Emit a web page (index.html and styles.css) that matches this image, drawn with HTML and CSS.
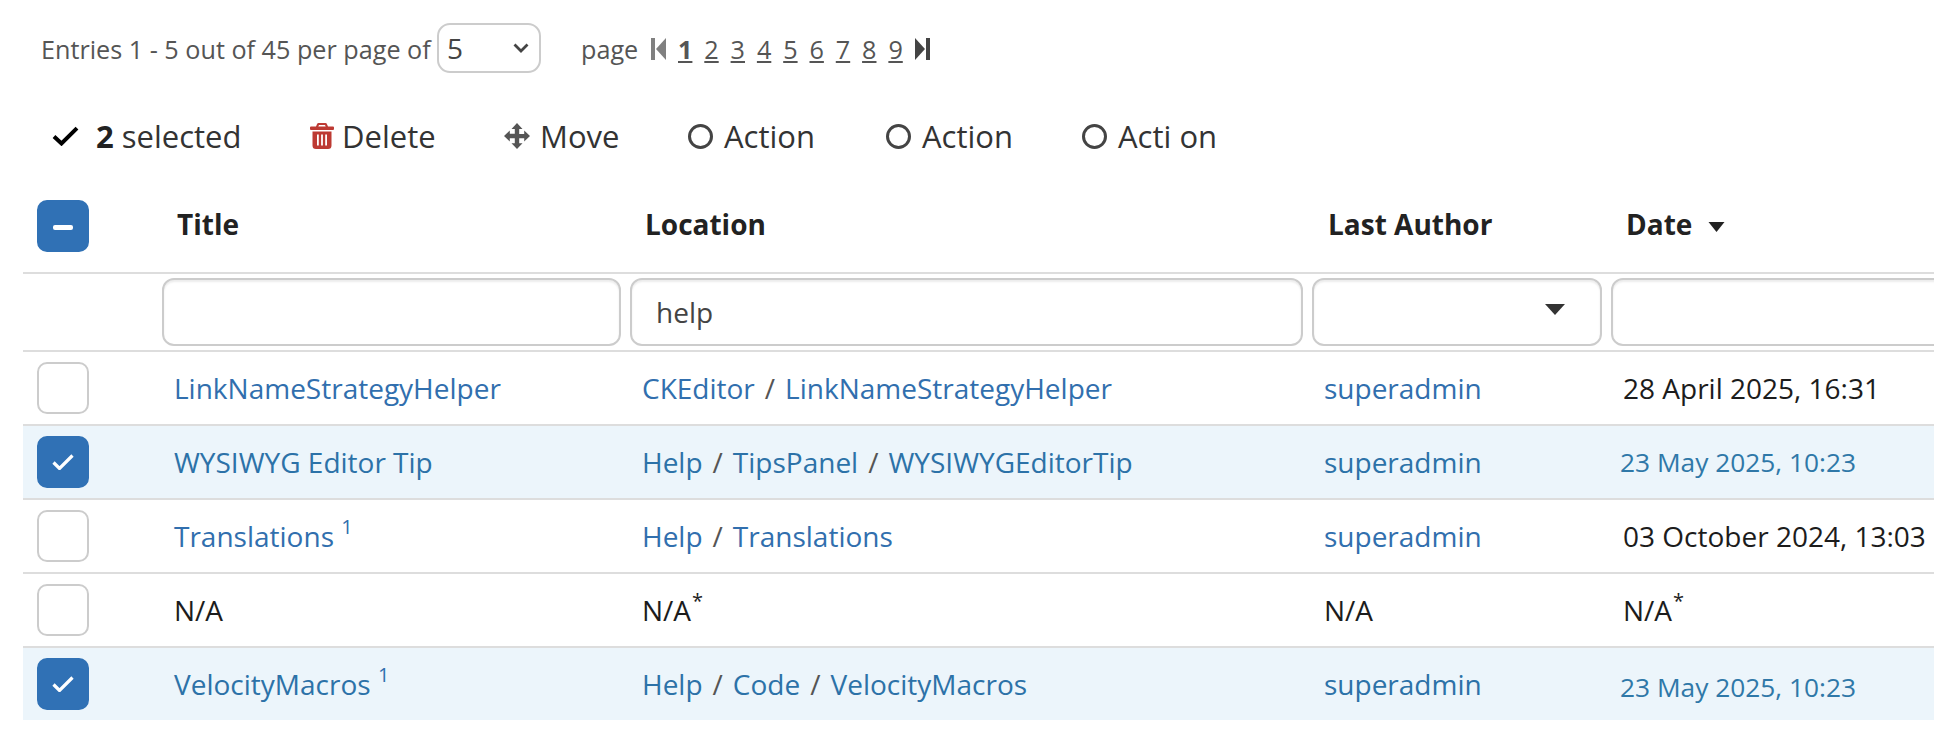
FILE: index.html
```html
<!DOCTYPE html>
<html lang="en">
<head>
<meta charset="utf-8">
<title>Live Data</title>
<link rel="stylesheet" href="styles.css">
</head>
<body>
<div class="pagination">
  <span class="entries">Entries 1 - 5 out of 45 per page of</span>
  <span class="size-select"><span>5</span>
    <svg class="chev" viewBox="0 0 16 10"><path d="M1.500 1.500 8 8l6.500-6.500" fill="none" stroke="#444" stroke-width="2.800"/></svg>
  </span>
  <span class="page-label">page</span>
  <svg class="pg-ico" viewBox="0 0 15 22"><rect x="0" y="0" width="4" height="22" fill="#808080"/><path d="M15 0v22L5 11z" fill="#808080"/></svg>
  <span class="pages"><a class="cur">1</a><a>2</a><a>3</a><a>4</a><a>5</a><a>6</a><a>7</a><a>8</a><a>9</a></span>
  <svg class="pg-ico" viewBox="0 0 15 22"><path d="M0 0v22l10-11z" fill="#444"/><rect x="11" y="0" width="4" height="22" fill="#444"/></svg>
</div>
<div class="actions">
  <span class="act sel"><svg class="ico-check" viewBox="0 0 27 20"><path d="M2 10.500l7.500 7L25 2.200" fill="none" stroke="#000" stroke-width="4"/></svg><span class="sel-text"><b>2</b> selected</span></span>
  <span class="act del"><svg class="ico-trash" viewBox="0 0 24 26"><path fill="#bd3a33" d="M8.500 0h7a1.500 1.500 0 0 1 1.300.8L18 3.500h5a1 1 0 0 1 1 1V6a1 1 0 0 1-1 1H1a1 1 0 0 1-1-1V4.500a1 1 0 0 1 1-1h5L7.200.8A1.500 1.500 0 0 1 8.500 0zM9 2 8.300 3.500h7.400L15 2zM2.500 8.500h19V22.500a3.500 3.500 0 0 1-3.500 3.500H6a3.500 3.500 0 0 1-3.500-3.500zM7 11.500v11h1.800v-11zm4.100 0v11h1.800v-11zm4.100 0v11H17v-11z" fill-rule="evenodd"/></svg>Delete</span>
  <span class="act mov"><svg class="ico-move" viewBox="0 0 26 26"><path fill="#555" d="M13 0l5.500 6h-3.300v5h5V7.500L26 13l-5.800 5.500V15.200h-5v5h3.300L13 26l-5.500-5.800h3.300v-5h-5v3.300L0 13l5.800-5.500V10.800h5v-4.800H7.500z"/></svg>Move</span>
  <span class="act a1"><i class="ring"></i>Action</span>
  <span class="act a2"><i class="ring"></i>Action</span>
  <span class="act a3"><i class="ring"></i>Acti on</span>
</div>
<table class="grid">
  <colgroup><col class="c0"><col class="c1"><col class="c2"><col class="c3"><col class="c4"></colgroup>
  <thead>
    <tr class="heads">
      <th class="chk"><span class="box on"><i class="dash"></i></span></th>
      <th>Title</th>
      <th>Location</th>
      <th>Last Author</th>
      <th>Date <svg class="sort" viewBox="0 0 16 10"><path d="M0 0h16L8 10z" fill="#222"/></svg></th>
    </tr>
    <tr class="filters">
      <td></td>
      <td><span class="field"></span></td>
      <td><span class="field">help</span></td>
      <td><span class="field drop"><svg viewBox="0 0 20 11"><path d="M0 0h20L10 11z" fill="#333"/></svg></span></td>
      <td><span class="field"></span></td>
    </tr>
  </thead>
  <tbody>
    <tr>
      <td class="chk"><span class="box"></span></td>
      <td><a>LinkNameStrategyHelper</a></td>
      <td><a>CKEditor</a><s>/</s><a>LinkNameStrategyHelper</a></td>
      <td><a>superadmin</a></td>
      <td>28 April 2025, 16:31</td>
    </tr>
    <tr class="picked">
      <td class="chk"><span class="box on"><svg viewBox="0 0 22 16"><path d="M1.500 8.500l6 6L20.500 1.500" fill="none" stroke="#fff" stroke-width="3.200"/></svg></span></td>
      <td><a>WYSIWYG Editor Tip</a></td>
      <td><a>Help</a><s>/</s><a>TipsPanel</a><s>/</s><a>WYSIWYGEditorTip</a></td>
      <td><a>superadmin</a></td>
      <td><span class="stamp up">23 May 2025, 10:23</span></td>
    </tr>
    <tr>
      <td class="chk"><span class="box"></span></td>
      <td><a>Translations</a> <sup>1</sup></td>
      <td><a>Help</a><s>/</s><a>Translations</a></td>
      <td><a>superadmin</a></td>
      <td>03 October 2024, 13:03</td>
    </tr>
    <tr>
      <td class="chk"><span class="box"></span></td>
      <td>N/A</td>
      <td>N/A<sup class="star">*</sup></td>
      <td>N/A</td>
      <td>N/A<sup class="star">*</sup></td>
    </tr>
    <tr class="picked">
      <td class="chk"><span class="box on"><svg viewBox="0 0 22 16"><path d="M1.500 8.500l6 6L20.500 1.500" fill="none" stroke="#fff" stroke-width="3.200"/></svg></span></td>
      <td><a>VelocityMacros</a> <sup>1</sup></td>
      <td><a>Help</a><s>/</s><a>Code</a><s>/</s><a>VelocityMacros</a></td>
      <td><a>superadmin</a></td>
      <td><span class="stamp down">23 May 2025, 10:23</span></td>
    </tr>
  </tbody>
</table>
</body>
</html>
```
FILE: styles.css
```css
html, body { margin: 0; padding: 0; background: #fff; overflow: hidden; height: 756px; }
body { font-family: "Open Sans", "Noto Sans", sans-serif; color: #222; width: 1934px; }

.pagination { display: flex; align-items: center; height: 50px; padding: 23px 0 0 41px; font-size: 25.200px; color: #555; }
.entries { width: 396px; white-space: nowrap; padding-top: 2px; }
.size-select { box-sizing: border-box; width: 104px; height: 50px; border: 2px solid #ccc; border-radius: 13px; display: flex; align-items: center; justify-content: space-between; padding: 0 10px 0 8px; font-size: 28px; color: #444; }
.chev { width: 16px; height: 10px; }
.page-label { margin-left: 40px; width: 70px; padding-top: 2px; }
.pg-ico { width: 15px; height: 22px; margin-top: 2px; }
.pages { display: flex; gap: 12px; margin: 0 12px; padding-top: 2px; }
.pages a { text-decoration: underline; width: 14.300px; }
.pages .cur { font-weight: 700; }

.actions { display: flex; align-items: center; height: 58px; margin-top: 34px; font-size: 31px; color: #333; }
.act { display: flex; align-items: center; white-space: nowrap; }
.sel { margin-left: 52px; width: 258px; }
.sel b { color: #222; }
.ico-check { width: 27px; height: 20px; margin-right: 17px; }
.del { width: 194px; }
.ico-trash { width: 24px; height: 26px; margin-right: 8px; }
.mov { width: 184px; }
.ico-move { width: 26px; height: 26px; margin-right: 10px; }
.a1 { width: 198px; }
.a2 { width: 196px; }
.ring { box-sizing: border-box; width: 25px; height: 25px; border: 3px solid #444; border-radius: 50%; margin-right: 11px; }

.grid { border-collapse: collapse; table-layout: fixed; width: 1987px; margin: 15px 0 0 23px; font-size: 28px; }
.c0 { width: 134px; }
.c1 { width: 468px; }
.c2 { width: 682px; }
.c3 { width: 299px; }
.c4 { width: 404px; }
.grid th { text-align: left; font-weight: 700; color: #222; padding: 0 0 5px 20px; height: 93px; box-sizing: border-box; border-bottom: 2px solid #ddd; vertical-align: middle; }
.grid th:nth-child(4) { padding-left: 21px; }
.grid th.chk, .grid td.chk { padding: 0 0 1px 14px; }
.sort { width: 17px; height: 10px; margin: 0 0 3px 8px; }
.filters td { height: 78px; padding: 4px 4px 4px 5px; box-sizing: border-box; border-bottom: 2px solid #ddd; }
.field { box-sizing: border-box; display: flex; align-items: center; height: 68px; border: 2px solid #ccc; border-radius: 12px; box-shadow: inset 0 2px 2px rgba(0,0,0,.08); padding-left: 24px; color: #444; background: #fff; }
.filters td:last-child .field { width: 420px; }
.drop { justify-content: flex-end; padding: 0 35px 6px 0; }
.drop svg { width: 20px; height: 11px; }

tbody td { height: 74px; box-sizing: border-box; padding: 0 0 0 17px; border-bottom: 2px solid #ddd; color: #1c1c1c; white-space: nowrap; vertical-align: middle; }
tbody tr:last-child td { border-bottom: 0; height: 73px; }
.grid tbody td.chk { padding: 0 0 0 14px; }
.picked td { background: #ecf5fb; }
tbody a { color: #316fae; }
.picked a { color: #2c72a8; }
tbody s { text-decoration: none; color: #555; margin: 0 10px; }
.stamp { color: #2f78a8; font-size: 26.300px; margin-left: -3px; position: relative; }
.up { top: -1px; }
.down { top: 2px; }
sup { font-size: 20px; line-height: 0; color: #316fae; position: relative; top: -3px; vertical-align: super; }
sup.star { color: #222; margin-left: 1px; }
.box { box-sizing: border-box; display: flex; align-items: center; justify-content: center; width: 52px; height: 52px; border: 2px solid #ccc; border-radius: 10px; background: #fff; }
.box.on { background: #3071b5; border-color: #3071b5; }
.box svg { width: 22px; height: 16px; }
.dash { width: 20px; height: 5px; border-radius: 2px; background: #fff; margin-top: 3px; }
```
